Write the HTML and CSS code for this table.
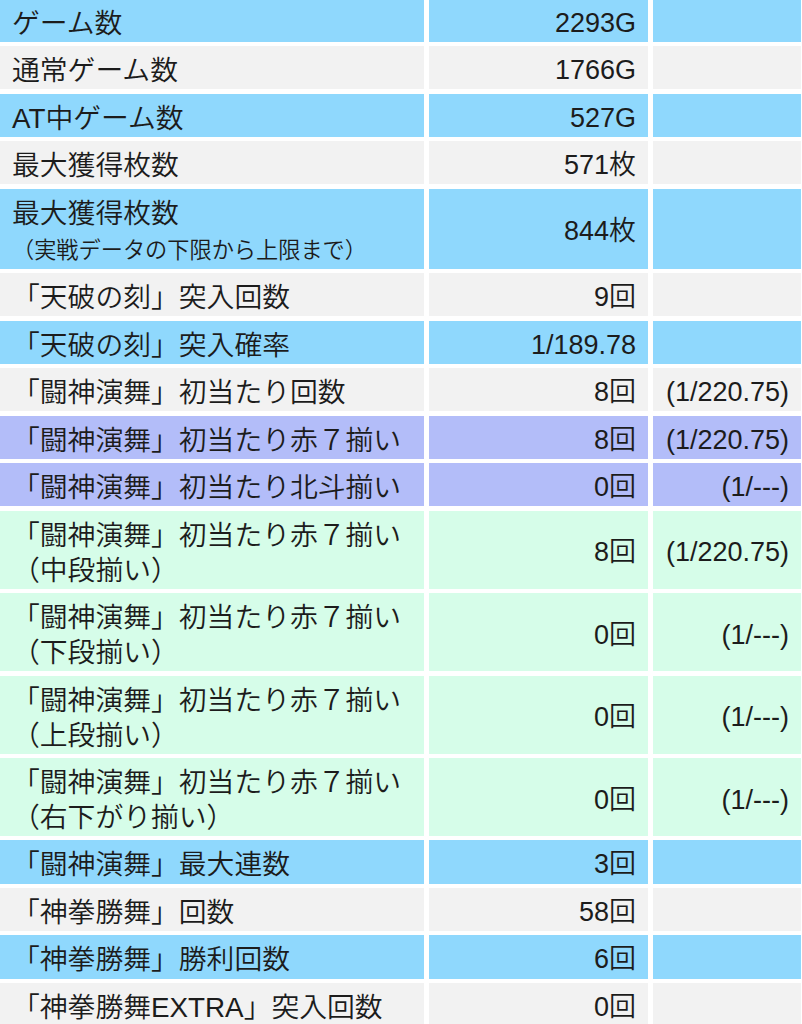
FILE: index.html
```html
<!DOCTYPE html>
<html lang="ja">
<head>
<meta charset="utf-8">
<title>データ</title>
<link rel="stylesheet" href="styles.css">
</head>
<body>
<div class="table">
  <div class="c label blue">ゲーム数</div><div class="c blue num">2293G</div><div class="c blue num"></div>
  <div class="c label grey">通常ゲーム数</div><div class="c grey num">1766G</div><div class="c grey num"></div>
  <div class="c label blue">AT中ゲーム数</div><div class="c blue num">527G</div><div class="c blue num"></div>
  <div class="c label grey">最大獲得枚数</div><div class="c grey num">571枚</div><div class="c grey num"></div>
  <div class="c label blue">最大獲得枚数<br><span class="sub">（実戦データの下限から上限まで）</span></div><div class="c blue num">844枚</div><div class="c blue num"></div>
  <div class="c label grey">「天破の刻」突入回数</div><div class="c grey num">9回</div><div class="c grey num"></div>
  <div class="c label blue">「天破の刻」突入確率</div><div class="c blue num">1/189.78</div><div class="c blue num"></div>
  <div class="c label grey">「闘神演舞」初当たり回数</div><div class="c grey num">8回</div><div class="c grey num">(1/220.75)</div>
  <div class="c label purple">「闘神演舞」初当たり赤７揃い</div><div class="c purple num">8回</div><div class="c purple num">(1/220.75)</div>
  <div class="c label purple">「闘神演舞」初当たり北斗揃い</div><div class="c purple num">0回</div><div class="c purple num">(1/---)</div>
  <div class="c label green">「闘神演舞」初当たり赤７揃い<br>（中段揃い）</div><div class="c green num">8回</div><div class="c green num">(1/220.75)</div>
  <div class="c label green">「闘神演舞」初当たり赤７揃い<br>（下段揃い）</div><div class="c green num">0回</div><div class="c green num">(1/---)</div>
  <div class="c label green">「闘神演舞」初当たり赤７揃い<br>（上段揃い）</div><div class="c green num">0回</div><div class="c green num">(1/---)</div>
  <div class="c label green">「闘神演舞」初当たり赤７揃い<br>（右下がり揃い）</div><div class="c green num">0回</div><div class="c green num">(1/---)</div>
  <div class="c label blue">「闘神演舞」最大連数</div><div class="c blue num">3回</div><div class="c blue num"></div>
  <div class="c label grey">「神拳勝舞」回数</div><div class="c grey num">58回</div><div class="c grey num"></div>
  <div class="c label blue">「神拳勝舞」勝利回数</div><div class="c blue num">6回</div><div class="c blue num"></div>
  <div class="c label grey">「神拳勝舞EXTRA」突入回数</div><div class="c grey num">0回</div><div class="c grey num"></div>
</div>
</body>
</html>
```
FILE: styles.css
```css
html, body {
  margin: 0;
  padding: 0;
  background: #ffffff;
}
body {
  font-family: "Liberation Sans", "Noto Sans CJK JP", sans-serif;
  font-weight: 350;
  color: #1c1c1c;
  font-size: 27px;
  overflow: hidden;
}
.table {
  display: grid;
  grid-template-columns: 424px 219px 148px;
  column-gap: 5px;
  row-gap: 4.2px;
  margin-top: -1.3px;
}
.c {
  line-height: 35px;
  padding: 7px 12px 1.3px;
  white-space: nowrap;
}
.label {
  font-size: 27.8px;
}
.num {
  text-align: right;
  display: flex;
  align-items: center;
  justify-content: flex-end;
}
.sub {
  font-size: 22.2px;
}
.blue { background: #8fd8fd; }
.grey { background: #f2f2f2; }
.purple { background: #b3bdf9; }
.green { background: #d6fde9; }
```
